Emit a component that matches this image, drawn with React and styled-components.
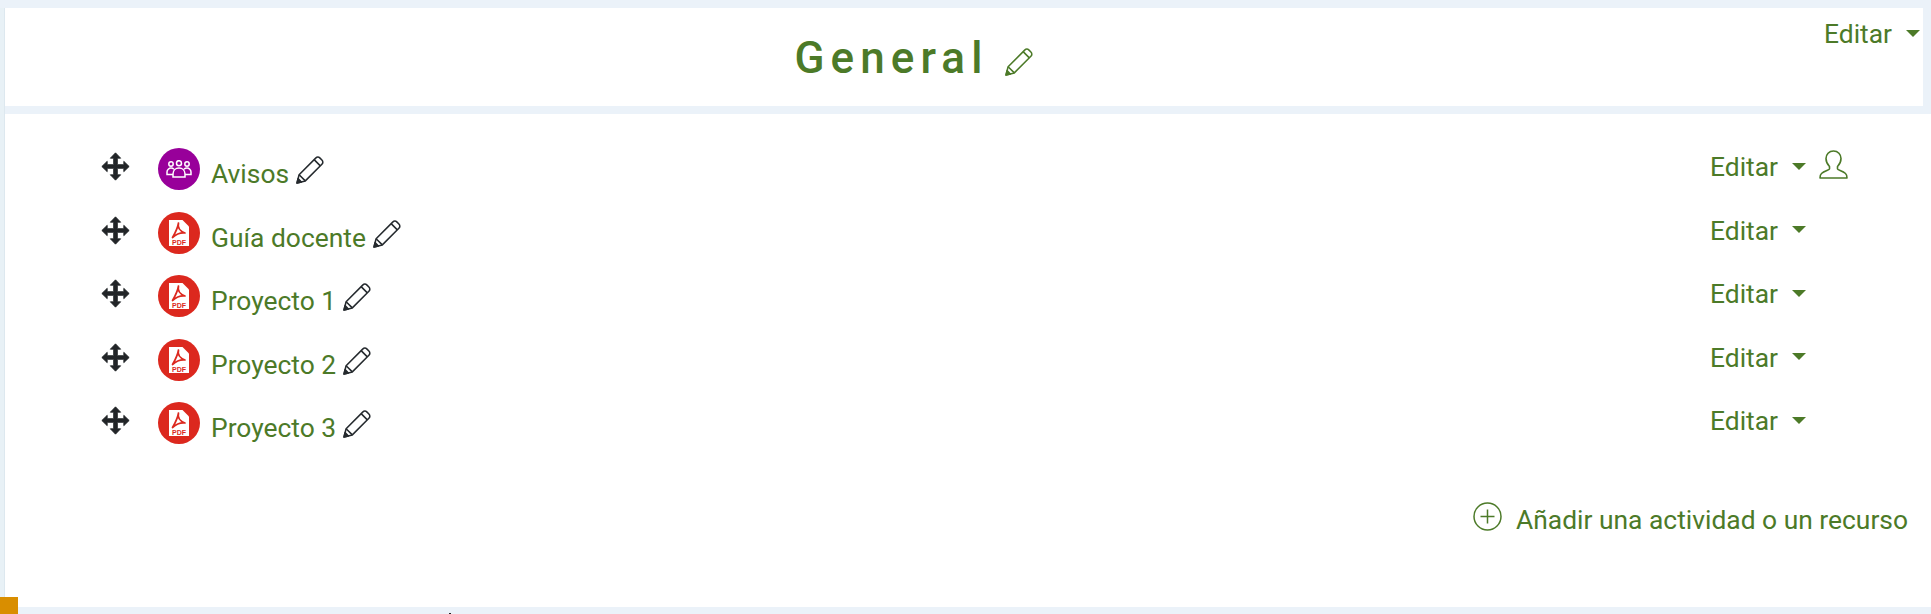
import React from 'react';
import styled, { createGlobalStyle } from 'styled-components';

const green = '#4c7a28';
const band = '#ebf2f9';

const GlobalStyle = createGlobalStyle`
  html, body {
    margin: 0;
    padding: 0;
    background: #fff;
    overflow: hidden;
  }
  body {
    font-family: Roboto, "Liberation Sans", sans-serif;
  }
`;

const Page = styled.div`
  position: relative;
  width: 1931px;
  height: 614px;
  box-sizing: border-box;
  display: flex;
  flex-direction: column;
  padding-top: 8px;
  padding-left: 5px;
  background: linear-gradient(${band}, ${band}) top left / 100% 8px no-repeat,
    linear-gradient(#e8f1f6, #e8f1f6) top left / 4px 100% no-repeat,
    linear-gradient(#dde8ef, #dde8ef) 4px 0 / 1px 100% no-repeat, #fff;
`;

const Header = styled.header`
  position: relative;
  height: 98px;
  flex: none;
  display: flex;
  align-items: flex-start;
  justify-content: center;
  padding: 26px 100px 0 0;
  box-sizing: border-box;
  border-right: 8px solid ${band};
`;

const Title = styled.h3`
  margin: 0;
  color: ${green};
  font-size: 44px;
  font-weight: 500;
  letter-spacing: 6.1px;
  line-height: 48px;
`;

const TitlePencil = styled.span`
  display: inline-flex;
  margin-left: 16px;
  margin-top: 13px;
  color: ${green};
`;

const HeaderMenu = styled.div`
  position: absolute;
  top: 10px;
  right: 3px;
`;

const Divider = styled.div`
  height: 8px;
  flex: none;
  background: ${band};
`;

const Section = styled.section`
  flex: 1;
  display: flex;
  flex-direction: column;
  padding: 34px 0 0 96px;
`;

const ActivityRow = styled.div`
  display: flex;
  align-items: flex-start;
  height: 63.6px;
`;

const Handle = styled.span`
  display: flex;
  width: 29px;
  height: 29px;
  margin-top: 4px;
  flex: none;
  color: #222528;
`;

const ModIcon = styled.span`
  width: 42px;
  height: 42px;
  margin-left: 28px;
  flex: none;
  border-radius: 50%;
  background: ${(p) => p.$bg};
  display: flex;
  align-items: center;
  justify-content: center;
`;

const Name = styled.a`
  display: flex;
  align-items: flex-start;
  margin-left: 11px;
  margin-top: 10px;
  color: ${green};
  font-size: 26.4px;
  line-height: 32px;
  white-space: nowrap;
`;

const NamePencil = styled.span`
  display: inline-flex;
  margin-left: 7px;
  margin-top: -3px;
  color: #252a2e;
`;

const RowMenu = styled.div`
  margin-left: auto;
  width: 138px;
  margin-right: 83px;
  display: flex;
  align-items: flex-start;
  margin-top: 3px;
`;

const EditMenu = styled.span`
  display: inline-flex;
  align-items: center;
  color: ${green};
  font-size: 26.4px;
  line-height: 32px;
`;

const Caret = styled.span`
  margin-left: 14px;
  margin-top: -2px;
  width: 0;
  height: 0;
  border-left: 7px solid transparent;
  border-right: 7px solid transparent;
  border-top: 7px solid ${green};
`;

const UserIcon = styled.span`
  display: inline-flex;
  margin-left: 13px;
  margin-top: -1px;
  color: ${green};
`;

const AddRow = styled.div`
  display: flex;
  align-items: flex-start;
  justify-content: flex-end;
  margin-top: 38px;
  margin-right: 23px;
  color: ${green};
  font-size: 26.4px;
  line-height: 32px;
`;

const AddIcon = styled.span`
  display: inline-flex;
  margin-right: 14px;
  margin-top: -2px;
`;

const Footer = styled.div`
  height: 7px;
  flex: none;
  background: ${band};
  margin-left: -5px;
`;

const Corner = styled.div`
  position: absolute;
  left: 0;
  bottom: 0;
  width: 18px;
  height: 17px;
  background: #d98e00;
`;

const Speck = styled.div`
  position: absolute;
  left: 449px;
  bottom: 0;
  width: 2px;
  height: 1px;
  background: #222;
`;

function Pencil({ size = 29 }) {
  return (
    <svg width={size} height={size} viewBox="0 0 28 28" fill="none" stroke="currentColor" strokeWidth="1.5" strokeLinejoin="round">
      <path d="M1 27l2-8L19 3c1.200-1.200 3-1.200 4.200 0l1.800 1.800c1.200 1.200 1.200 3 0 4.200L9 25z" />
      <path d="M3 19l6 6M17.500 4.500l6 6" />
      <path d="M1 27l1-4.200 3.200 3.200z" fill="currentColor" />
    </svg>
  );
}

function MoveIcon() {
  return (
    <svg width="29" height="29" viewBox="0 0 28 28" fill="currentColor" stroke="currentColor" strokeWidth="0.8" strokeLinejoin="round">
      <path d="M14 .8l5 5.200h-3.200v6.200H22V9l5.200 5-5.200 5v-3.200h-6.200V22H19l-5 5.200L9 22h3.200v-6.200H6V19L.8 14 6 9v3.200h6.200V6H9z" />
    </svg>
  );
}

function PdfGlyph() {
  return (
    <svg width="20" height="26" viewBox="0 0 20 26">
      <path d="M0 0h13.500L20 6.500V26H0z" fill="#fff" />
      <path d="M9.500 3c-1 4 0 7.500 6.500 10C12 12.500 8 13.500 3.500 17.500 6.500 12.500 8.500 9 9.500 3z" fill="none" stroke="#dc281e" strokeWidth="1.700" strokeLinejoin="round" />
      <text x="10" y="24.500" textAnchor="middle" fontSize="7" fontWeight="700" fill="#dc281e" fontFamily="Liberation Sans, sans-serif">PDF</text>
    </svg>
  );
}

function ForumGlyph() {
  return (
    <svg width="26" height="18" viewBox="0 0 26 18" fill="none" stroke="#fff" strokeWidth="1.500">
      <circle cx="13" cy="3.200" r="2.500" />
      <circle cx="5" cy="4" r="2.200" />
      <circle cx="21" cy="4" r="2.200" />
      <path d="M7 17v-3c0-3.500 2.500-6 6-6s6 2.500 6 6v3z" />
      <path d="M7 14.500H1V12c0-2 2-4 4-4 1.200 0 2.200.4 3 1.200M19 14.500h6V12c0-2-2-4-4-4-1.200 0-2.200.4-3 1.200" />
    </svg>
  );
}

function UserGlyph() {
  return (
    <svg width="29" height="29" viewBox="0 0 29 29" fill="none" stroke="currentColor" strokeWidth="1.600" strokeLinejoin="round">
      <path d="M14.500 1c4.500 0 7.500 3.500 7.500 7.500 0 3-1.500 6-3.500 8v2.500c0 1 5 2 8 4.500 1.200 1 1.500 3 1.500 4.500H1c0-1.500.3-3.500 1.500-4.500 3-2.500 8-3.500 8-4.500v-2.500C8.500 14.500 7 11.500 7 8.500 7 4.500 10 1 14.500 1z" />
    </svg>
  );
}

function PlusGlyph() {
  return (
    <svg width="29" height="29" viewBox="0 0 29 29" fill="none" stroke={green} strokeWidth="1.500">
      <circle cx="14.500" cy="14.500" r="13.500" />
      <path d="M14.500 7.500v14M7.500 14.500h14" />
    </svg>
  );
}

const activities = [
  { name: 'Avisos', kind: 'forum' },
  { name: 'Guía docente', kind: 'pdf' },
  { name: 'Proyecto 1', kind: 'pdf' },
  { name: 'Proyecto 2', kind: 'pdf' },
  { name: 'Proyecto 3', kind: 'pdf' },
];

export default function App() {
  return (
    <Page>
      <GlobalStyle />
      <Header>
        <Title>General</Title>
        <TitlePencil>
          <Pencil />
        </TitlePencil>
        <HeaderMenu>
          <EditMenu>
            Editar
            <Caret />
          </EditMenu>
        </HeaderMenu>
      </Header>
      <Divider />
      <Section>
        {activities.map((item) => (
          <ActivityRow key={item.name}>
            <Handle>
              <MoveIcon />
            </Handle>
            <ModIcon $bg={item.kind === 'forum' ? '#98009a' : '#dc281e'}>
              {item.kind === 'forum' ? <ForumGlyph /> : <PdfGlyph />}
            </ModIcon>
            <Name>
              {item.name}
              <NamePencil>
                <Pencil />
              </NamePencil>
            </Name>
            <RowMenu>
              <EditMenu>
                Editar
                <Caret />
              </EditMenu>
              {item.kind === 'forum' && (
                <UserIcon>
                  <UserGlyph />
                </UserIcon>
              )}
            </RowMenu>
          </ActivityRow>
        ))}
        <AddRow>
          <AddIcon>
            <PlusGlyph />
          </AddIcon>
          Añadir una actividad o un recurso
        </AddRow>
      </Section>
      <Footer />
      <Corner />
      <Speck />
    </Page>
  );
}
